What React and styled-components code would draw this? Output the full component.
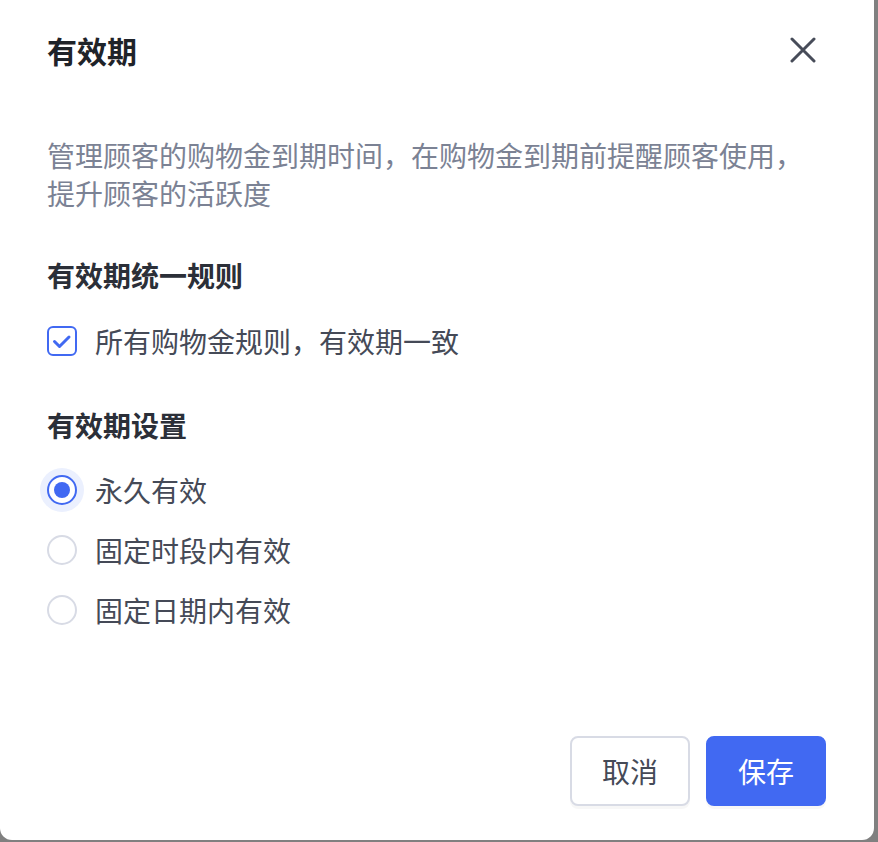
import React, { useState } from 'react'
import styled, { createGlobalStyle } from 'styled-components'

const GlobalStyle = createGlobalStyle`
  body {
    margin: 0;
    background: #808080;
    font-family: "Noto Sans CJK SC", "Noto Sans", sans-serif;
  }
`

const options = ['永久有效', '固定时段内有效', '固定日期内有效']

const App = () => {
  const [unified, setUnified] = useState(true)
  const [period, setPeriod] = useState(0)

  return (
    <>
      <GlobalStyle />
      <Modal>
        <Header>
          <Title>有效期</Title>
          <CloseButton aria-label="关闭">
            <svg width="26" height="26" viewBox="0 0 26 26">
              <path
                d="M2 2 L24 24 M24 2 L2 24"
                stroke="#474c59"
                strokeWidth="3"
                strokeLinecap="round"
              />
            </svg>
          </CloseButton>
        </Header>

        <Description>
          管理顾客的购物金到期时间，在购物金到期前提醒顾客使用，提升顾客的活跃度
        </Description>

        <SectionTitle $top={44}>有效期统一规则</SectionTitle>
        <CheckRow onClick={() => setUnified(!unified)}>
          <CheckBox $checked={unified}>
            {unified && (
              <svg width="26" height="26" viewBox="0 0 26 26">
                <polyline
                  points="5.5,13.5 10.5,18.5 20,9"
                  fill="none"
                  stroke="#4169f2"
                  strokeWidth="3"
                  strokeLinecap="round"
                  strokeLinejoin="round"
                />
              </svg>
            )}
          </CheckBox>
          <Label>所有购物金规则，有效期一致</Label>
        </CheckRow>

        <SectionTitle $top={43}>有效期设置</SectionTitle>
        <RadioGroup>
          {options.map((o, i) => (
            <RadioRow key={o} onClick={() => setPeriod(i)}>
              <Radio $checked={period === i} />
              <Label>{o}</Label>
            </RadioRow>
          ))}
        </RadioGroup>

        <Footer>
          <Button>取消</Button>
          <Button $primary>保存</Button>
        </Footer>
      </Modal>
    </>
  )
}

const Modal = styled.div`
  width: 874px;
  height: 840px;
  box-sizing: border-box;
  background: #fff;
  border-radius: 0 0 12px 12px;
  padding: 0 48px 34px 47px;
  display: flex;
  flex-direction: column;
`

const Header = styled.div`
  height: 100px;
  display: flex;
  align-items: center;
  justify-content: space-between;
`

const Title = styled.h1`
  margin: 0;
  font-size: 30px;
  font-weight: 700;
  color: #1f2329;
  line-height: 42px;
`

const CloseButton = styled.button`
  width: 48px;
  height: 48px;
  margin-right: -1px;
  border: none;
  background: transparent;
  padding: 0;
  display: flex;
  align-items: center;
  justify-content: center;
  cursor: pointer;
`

const Description = styled.p`
  margin: 36px 0 0;
  max-width: 770px;
  font-size: 28px;
  line-height: 38px;
  color: #7b8294;
`

const SectionTitle = styled.h2`
  margin: ${(p) => p.$top}px 0 0;
  font-size: 28px;
  line-height: 38px;
  font-weight: 700;
  color: #2b2f38;
`

const CheckRow = styled.div`
  margin-top: 25px;
  height: 44px;
  display: flex;
  align-items: center;
  gap: 18px;
  cursor: pointer;
`

const CheckBox = styled.span`
  width: 30px;
  height: 30px;
  box-sizing: border-box;
  border: 2px solid ${(p) => (p.$checked ? '#4169f2' : '#d6d9e3')};
  border-radius: 6px;
  background: #fff;
  display: flex;
  align-items: center;
  justify-content: center;
`

const Label = styled.span`
  font-size: 28px;
  line-height: 38px;
  color: #454a57;
`

const RadioGroup = styled.div`
  margin-top: 16px;
  display: flex;
  flex-direction: column;
`

const RadioRow = styled.div`
  height: 60px;
  display: flex;
  align-items: center;
  gap: 18px;
  cursor: pointer;
`

const Radio = styled.span`
  width: 30px;
  height: 30px;
  box-sizing: border-box;
  border-radius: 50%;
  border: 2px solid ${(p) => (p.$checked ? '#4169f2' : '#d8dbe5')};
  background: #fff;
  display: flex;
  align-items: center;
  justify-content: center;
  box-shadow: ${(p) => (p.$checked ? '0 0 0 7px #ebf0fe' : 'none')};

  &::after {
    content: '';
    width: 16px;
    height: 16px;
    border-radius: 50%;
    background: #4169f2;
    display: ${(p) => (p.$checked ? 'block' : 'none')};
  }
`

const Footer = styled.div`
  margin-top: auto;
  display: flex;
  justify-content: flex-end;
  gap: 16px;
`

const Button = styled.button`
  width: 120px;
  height: 70px;
  box-sizing: border-box;
  border-radius: 8px;
  font-family: inherit;
  font-size: 28px;
  cursor: pointer;
  border: 2px solid ${(p) => (p.$primary ? '#4169f2' : '#d8dbe5')};
  background: ${(p) => (p.$primary ? '#4169f2' : '#fff')};
  color: ${(p) => (p.$primary ? '#fff' : '#454a57')};
  box-shadow: 0 3px 0 rgba(0, 0, 0, 0.03);
`

export default App
